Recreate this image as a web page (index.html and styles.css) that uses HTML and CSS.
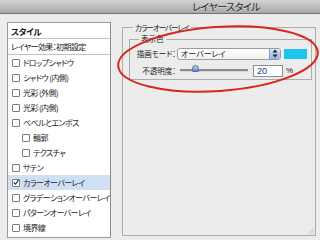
FILE: index.html
```html
<!DOCTYPE html>
<html lang="ja">
<head>
  <meta charset="UTF-8" />
  <meta name="viewport" content="width=device-width, initial-scale=1.0" />
  <title>レイヤースタイル</title>
  <link rel="stylesheet" href="styles.css">
</head>
<body>
  <div class="titlebar">レイヤースタイル</div>
  <div class="dialog">
    <div class="style-list">
      <div class="list-head bold">スタイル</div>
      <div class="list-head">レイヤー効果：初期設定</div>
      <div class="item"><span class="check"></span>ドロップシャドウ</div>
      <div class="item"><span class="check"></span>シャドウ (内側)</div>
      <div class="item"><span class="check"></span>光彩 (外側)</div>
      <div class="item"><span class="check"></span>光彩 (内側)</div>
      <div class="item"><span class="check"></span>ベベルとエンボス</div>
      <div class="item sub"><span class="check"></span>輪郭</div>
      <div class="item sub"><span class="check"></span>テクスチャ</div>
      <div class="item"><span class="check"></span>サテン</div>
      <div class="item selected">
        <span class="check">
          <svg width="7" height="7" viewBox="0 0 7 7"><path d="M1 3.5 L3 5.5 L6.5 0.5" fill="none" stroke="#1d2a44" stroke-width="1.3"/></svg>
        </span>カラーオーバーレイ
      </div>
      <div class="item"><span class="check"></span>グラデーションオーバーレイ</div>
      <div class="item"><span class="check"></span>パターンオーバーレイ</div>
      <div class="item"><span class="check"></span>境界線</div>
    </div>

    <fieldset class="panel">
      <legend>カラーオーバーレイ</legend>
      <fieldset class="group">
        <legend>表示色</legend>
        <div class="row">
          <span class="label">描画モード：</span>
          <div class="select">
            <span>オーバーレイ</span>
            <span class="stepper">
              <svg width="6" height="9" viewBox="0 0 6 9"><path d="M3 0.5 L5.5 3.5 H0.5 Z M3 8.5 L5.5 5.5 H0.5 Z" fill="#1a2030"/></svg>
            </span>
          </div>
          <span class="swatch"></span>
        </div>
        <div class="row">
          <span class="label">不透明度：</span>
          <div class="slider"><span class="knob"></span></div>
          <div class="field">20</div>
          <span class="unit">%</span>
        </div>
      </fieldset>
      <svg class="grip" width="6" height="6" viewBox="0 0 6 6"><path d="M6 0 L0 6 M6 2.5 L2.5 6 M6 5 L5 6" stroke="#b8b8b8" stroke-width="0.8"/></svg>
    </fieldset>
  </div>

  <svg class="mark" width="320" height="240" viewBox="0 0 320 240">
    <ellipse cx="218" cy="59" rx="100" ry="32" transform="rotate(-4 218 59)" fill="none" stroke="#d8261d" stroke-width="2"/>
  </svg>
</body>
</html>
```

FILE: styles.css
```css
body {
  margin: 0;
  width: 320px;
  height: 240px;
  overflow: hidden;
  background-color: #ececec;
  color: #1a1a1a;
  font-family: "Noto Sans CJK JP", "Noto Sans", sans-serif;
  font-feature-settings: "palt";
  position: relative;
}
.titlebar {
  height: 13px;
  line-height: 13px;
  padding-left: 192px;
  font-size: 10px;
  letter-spacing: -0.5px;
  color: #262626;
  text-shadow: 0 1px 0 rgba(255, 255, 255, 0.4);
  background: linear-gradient(#d2d2d2, #a9a9a9);
  border-bottom: 1px solid #6f6f6f;
}
.dialog {
  display: flex;
  height: 226px;
  box-sizing: border-box;
  padding: 8px 0 2px 7px;
}
.style-list {
  width: 104px;
  box-sizing: border-box;
  background: #fff;
  border: 1px solid #9a9a9a;
  border-right-color: #8a8a8a;
  font-size: 8px;
  letter-spacing: -0.6px;
  overflow: hidden;
}
.list-head {
  height: 15px;
  line-height: 15px;
  padding-left: 3px;
  border-bottom: 1px solid #c2c2c2;
  white-space: nowrap;
}
.list-head.bold {
  height: 15px;
  line-height: 16px;
  font-size: 8.5px;
  font-weight: bold;
  letter-spacing: -0.3px;
}
.item {
  height: 15px;
  display: flex;
  align-items: center;
  padding-left: 4px;
  white-space: nowrap;
}
.item.sub {
  padding-left: 14px;
}
.item.selected {
  background: #cfe0f5;
}
.check {
  width: 6px;
  height: 6px;
  border: 1px solid #7b7b7b;
  border-radius: 1px;
  background: #fff;
  margin-right: 3px;
  display: flex;
  align-items: center;
  justify-content: center;
  flex-shrink: 0;
}
.check svg {
  display: block;
}
.panel {
  position: relative;
  width: 194px;
  box-sizing: border-box;
  margin: 1px 0 2px 11px;
  padding: 0 3px 0 6px;
  border: 1px solid #acacac;
  min-width: 0;
}
.panel > legend {
  margin-left: 4px;
  padding: 0 2px;
  font-size: 7.5px;
  letter-spacing: -1px;
  line-height: 9px;
}
.group {
  margin: 3px 0 0 0;
  padding: 0 0 2px 5px;
  border: 1px solid #acacac;
  min-width: 0;
}
.group > legend {
  margin-left: 4px;
  padding: 0 2px;
  font-size: 7.5px;
  line-height: 8px;
}
.row {
  display: flex;
  align-items: center;
  height: 13px;
  margin-top: 4px;
  font-size: 7.5px;
}
.row + .row {
  margin-top: 4px;
}
.label {
  width: 41px;
  text-align: right;
  white-space: nowrap;
}
.select {
  margin-left: 1px;
  width: 104px;
  height: 12px;
  box-sizing: border-box;
  border: 1px solid #9c9c9c;
  border-radius: 3px;
  background: linear-gradient(#ffffff, #f1f1f1);
  display: flex;
  align-items: center;
  justify-content: space-between;
  padding-left: 3px;
  font-size: 8px;
  overflow: hidden;
}
.stepper {
  width: 10px;
  height: 10px;
  background: linear-gradient(#d5e6fa, #8cb6ea);
  border-left: 1px solid #7e9cc4;
  border-radius: 0 2px 2px 0;
  display: flex;
  align-items: center;
  justify-content: center;
}
.swatch {
  margin-left: 3px;
  width: 23px;
  height: 10px;
  background: #1ec4f0;
}
.slider {
  position: relative;
  margin-left: 4px;
  width: 68px;
  height: 2px;
  background: #8c8c8c;
  border-bottom: 1px solid #d8d8d8;
}
.knob {
  position: absolute;
  left: 12px;
  top: -4px;
  width: 5px;
  height: 5px;
  border-radius: 50% 50% 1px 1px;
  background: linear-gradient(#bcd4f2, #5d88c4);
  border: 1px solid #54729c;
}
.field {
  margin-left: 5px;
  width: 30px;
  height: 12px;
  box-sizing: border-box;
  border: 1px solid #8e8e8e;
  background: #fff;
  color: #163a8a;
  font-family: "Liberation Sans", sans-serif;
  font-size: 9px;
  line-height: 10px;
  padding-left: 3px;
}
.unit {
  margin-left: 3px;
  font-family: "Liberation Sans", sans-serif;
  font-size: 8px;
}
.grip {
  position: absolute;
  right: 1px;
  bottom: 1px;
}
.mark {
  position: absolute;
  left: 0;
  top: 0;
  pointer-events: none;
}
```
